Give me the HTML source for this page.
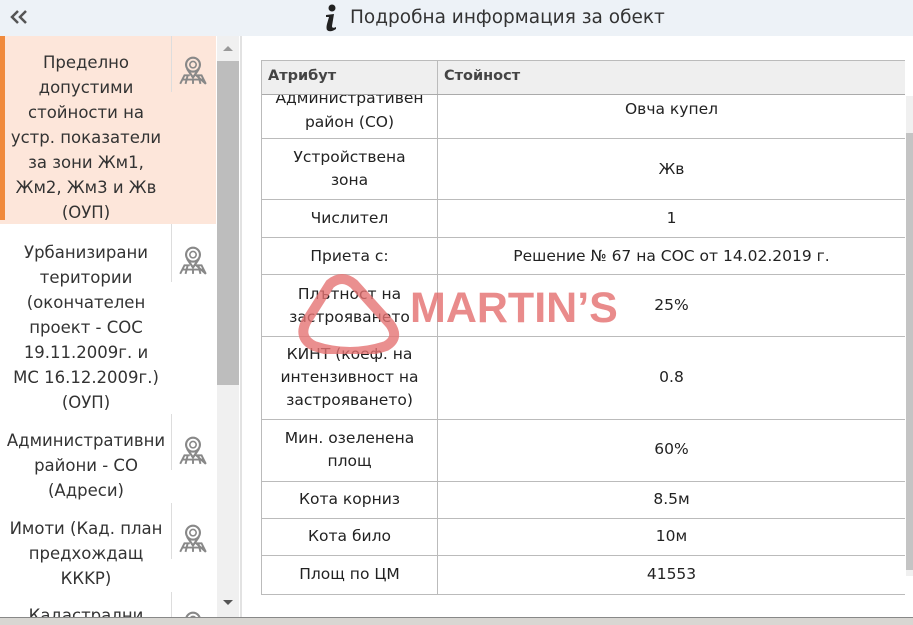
<!DOCTYPE html>
<html><head><meta charset="utf-8"><style>
*{margin:0;padding:0;box-sizing:border-box}
html{overflow:hidden;width:913px;height:625px}
body{width:913px;height:625px;overflow:hidden;background:#fff;font-family:"DejaVu Sans","Liberation Sans",sans-serif;color:#333;position:relative}
.hdr{position:absolute;left:0;top:0;width:913px;height:36px;background:#edf2f7}
.hdr .t{position:absolute;left:350px;top:7px;font-size:18.5px;color:#333}
.item{position:absolute;left:0;width:172px;text-align:center;font-size:16.5px;line-height:25px;color:#333}
.sep{position:absolute;left:171px;width:1px;background:#ddd}
.ic{position:absolute;left:177px;width:32px;height:32px}
.sb{position:absolute;left:217px;top:36px;width:22px;height:581px;background:#f0f0f0}
.cell{position:absolute;font-size:15.5px;line-height:23px;text-align:center;color:#222}
.h{position:absolute;top:61px;font-size:14.5px;font-weight:bold;color:#444}
.hl{position:absolute;height:1px;background:#bbb;left:262px;width:643px}
</style></head><body>
<div class="hdr">
<svg style="position:absolute;left:9px;top:9px" width="20" height="16" viewBox="0 0 20 16"><path d="M9 2 L3 8 L9 14 M17 2 L11 8 L17 14" fill="none" stroke="#555" stroke-width="2.5"/></svg>
<svg style="position:absolute;left:323px;top:4px" width="16" height="28" viewBox="0 0 16 28"><circle cx="9" cy="4" r="3.5" fill="#222"/><path d="M3 11 L11 10 L9 22 Q9 25 13 23 L13 25 Q7 29 4 26 Q3 24 4 20 L6 13 L3 13Z" fill="#222"/></svg>
<div class="t">Подробна информация за обект</div>
</div>

<div style="position:absolute;left:0;top:36px;width:216px;height:188px;background:#fde6da"></div>
<div style="position:absolute;left:0;top:36px;width:5px;height:184px;background:#f08a3c"></div>
<div class="item" style="top:50px">Пределно<br>допустими<br>стойности на<br>устр. показатели<br>за зони Жм1,<br>Жм2, Жм3 и Жв<br>(ОУП)</div>
<div class="item" style="top:240px">Урбанизирани<br>територии<br>(окончателен<br>проект - СОС<br>19.11.2009г. и<br>МС 16.12.2009г.)<br>(ОУП)</div>
<div class="item" style="top:428px">Административни<br>райони - СО<br>(Адреси)</div>
<div class="item" style="top:516px">Имоти (Кад. план<br>предхождащ<br>ККKР)</div>
<div class="item" style="top:603px">Кадастрални</div>
<div class="sep" style="top:36px;height:56px"></div>
<div class="sep" style="top:224px;height:58px"></div>
<div class="sep" style="top:414px;height:56px"></div>
<div class="sep" style="top:503px;height:56px"></div>
<div class="sep" style="top:592px;height:25px"></div>
<svg width="0" height="0" style="position:absolute"><defs><g id="pin"><circle cx="15" cy="10" r="6.5" fill="none" stroke="#888" stroke-width="2"/><circle cx="15" cy="10" r="3" fill="none" stroke="#888" stroke-width="1.5"/><path d="M9.5 14 L15 22 L20.5 14" fill="none" stroke="#888" stroke-width="2"/><path d="M3 28 L7 20 L12 20 M18 20 L23 20 L27 28 Z M5 24 L25 24 M10 20 L8 28 M20 20 L22 28 M15 24 L15 28" fill="none" stroke="#888" stroke-width="1.8"/></g></defs></svg>
<svg class="ic" style="top:54px" viewBox="0 0 30 30"><use href="#pin"/></svg>
<svg class="ic" style="top:244px" viewBox="0 0 30 30"><use href="#pin"/></svg>
<svg class="ic" style="top:434px" viewBox="0 0 30 30"><use href="#pin"/></svg>
<svg class="ic" style="top:522px" viewBox="0 0 30 30"><use href="#pin"/></svg>
<div style="position:absolute;left:177px;top:609px;width:32px;height:8px;overflow:hidden"><svg width="32" height="32" viewBox="0 0 30 30"><use href="#pin"/></svg></div>

<div class="sb"><div style="position:absolute;left:0;top:25px;width:22px;height:324px;background:#bdbdbd"></div>
<div style="position:absolute;left:6px;top:10px;border:5px solid transparent;border-bottom:5px solid #999;border-top:0"></div>
<div style="position:absolute;left:6px;top:564px;border:5px solid transparent;border-top:5px solid #555;border-bottom:0"></div></div>
<div style="position:absolute;left:240px;top:36px;width:2px;height:581px;background:#e2e2e2"></div>

<div style="position:absolute;left:262px;top:60px;width:643px;height:34px;background:#efefef"></div>
<div style="position:absolute;left:262px;top:94px;width:643px;height:500px;overflow:hidden">
<div class="cell" style="left:0;top:-8px;width:175px;line-height:24px">Административен<br>район (СО)</div></div>
<div class="h" style="left:268px;top:68px">Атрибут</div>
<div class="h" style="left:444px;top:68px">Стойност</div>
<div style="position:absolute;left:261px;top:60px;width:1px;height:535px;background:#bbb"></div>
<div style="position:absolute;left:437px;top:60px;width:1px;height:535px;background:#bbb"></div>
<div class="hl" style="top:60px"></div>
<div class="hl" style="top:94px;background:#aaa"></div>
<div class="hl" style="top:138px"></div>
<div class="hl" style="top:199px"></div>
<div class="hl" style="top:237px"></div>
<div class="hl" style="top:274px"></div>
<div class="hl" style="top:336px"></div>
<div class="hl" style="top:419px"></div>
<div class="hl" style="top:481px"></div>
<div class="hl" style="top:518px"></div>
<div class="hl" style="top:555px"></div>
<div class="hl" style="top:594px"></div>

<div class="cell" style="left:438px;top:98px;width:467px">Овча купел</div>
<div class="cell" style="left:262px;top:146px;width:175px">Устройствена<br>зона</div>
<div class="cell" style="left:438px;top:158px;width:467px">Жв</div>
<div class="cell" style="left:262px;top:207px;width:175px">Числител</div>
<div class="cell" style="left:438px;top:207px;width:467px">1</div>
<div class="cell" style="left:262px;top:245px;width:175px">Приета с:</div>
<div class="cell" style="left:438px;top:245px;width:467px">Решение № 67 на СОС от 14.02.2019 г.</div>
<div class="cell" style="left:262px;top:283px;width:175px">Плътност на<br>застрояването</div>
<div class="cell" style="left:438px;top:294px;width:467px">25%</div>
<div class="cell" style="left:262px;top:343px;width:175px">КИНТ (коеф. на<br>интензивност на<br>застрояването)</div>
<div class="cell" style="left:438px;top:366px;width:467px">0.8</div>
<div class="cell" style="left:262px;top:427px;width:175px">Мин. озеленена<br>площ</div>
<div class="cell" style="left:438px;top:438px;width:467px">60%</div>
<div class="cell" style="left:262px;top:488px;width:175px">Кота корниз</div>
<div class="cell" style="left:438px;top:488px;width:467px">8.5м</div>
<div class="cell" style="left:262px;top:525px;width:175px">Кота било</div>
<div class="cell" style="left:438px;top:525px;width:467px">10м</div>
<div class="cell" style="left:262px;top:563px;width:175px">Площ по ЦМ</div>
<div class="cell" style="left:438px;top:563px;width:467px">41553</div>

<div style="position:absolute;left:906px;top:96px;width:7px;height:480px;background:#f0f0f0"></div>
<div style="position:absolute;left:906px;top:133px;width:7px;height:437px;background:#c4c4c4"></div>

<svg style="position:absolute;left:290px;top:274px" width="130" height="80" viewBox="0 0 130 80"><path d="M40 10 Q52 0 64 10 L100 50 Q110 64 96 72 Q60 84 24 72 Q8 64 16 48 Z" fill="none" stroke="#e57373" stroke-opacity="0.8" stroke-width="10" stroke-linejoin="round"/></svg>
<div style="position:absolute;left:410px;top:285px;font-family:'Liberation Sans',sans-serif;font-weight:bold;font-size:43px;line-height:46px;color:rgba(226,100,100,0.75)">MARTIN’S</div>

<div style="position:absolute;left:0;top:617px;width:913px;height:8px;background:#d8d6d2;border-top:1px solid #888"></div>
</body></html>
